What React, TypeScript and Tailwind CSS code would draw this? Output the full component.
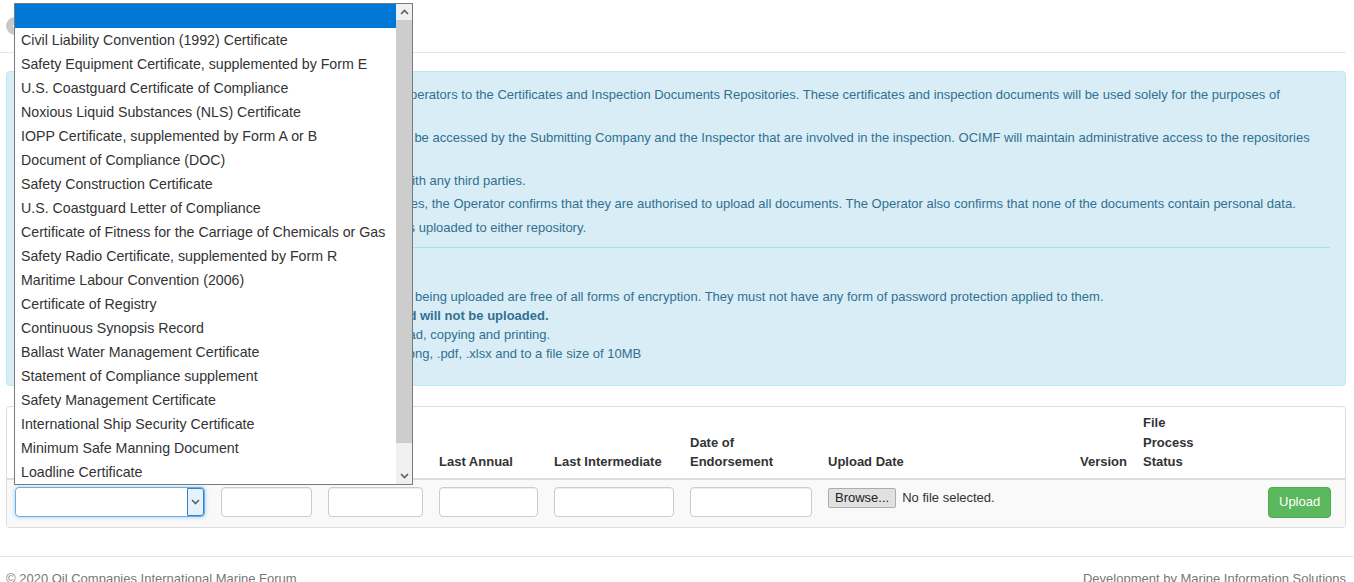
import { ChevronLeft } from 'lucide-react';

const certificateTypes = [
  '',
  'Civil Liability Convention (1992) Certificate',
  'Safety Equipment Certificate, supplemented by Form E',
  'U.S. Coastguard Certificate of Compliance',
  'Noxious Liquid Substances (NLS) Certificate',
  'IOPP Certificate, supplemented by Form A or B',
  'Document of Compliance (DOC)',
  'Safety Construction Certificate',
  'U.S. Coastguard Letter of Compliance',
  'Certificate of Fitness for the Carriage of Chemicals or Gas',
  'Safety Radio Certificate, supplemented by Form R',
  'Maritime Labour Convention (2006)',
  'Certificate of Registry',
  'Continuous Synopsis Record',
  'Ballast Water Management Certificate',
  'Statement of Compliance supplement',
  'Safety Management Certificate',
  'International Ship Security Certificate',
  'Minimum Safe Manning Document',
  'Loadline Certificate',
];

function Chevron({ up }: { up?: boolean }) {
  return (
    <svg width="9" height="6" viewBox="0 0 9 6" className="block">
      <polyline
        points={up ? '1,5 4.5,1.5 8,5' : '1,1 4.5,4.5 8,1'}
        fill="none"
        stroke="#606060"
        strokeWidth="1.6"
      />
    </svg>
  );
}

// open native list of the certificate type select
function SelectDropdown() {
  return (
    <div className="absolute left-[14px] top-[3px] z-10 flex h-[482px] w-[399px] border border-[#7a7a7a] bg-white">
      <ul className="w-[381px]">
        {certificateTypes.map((label, i) => (
          <li
            key={i}
            className={
              i === 0
                ? 'h-[24px] bg-[#0078d7] pl-[6px] leading-[24px] text-white'
                : 'h-[24px] whitespace-nowrap pl-[6px] text-[14.2px] leading-[24px] text-[#333]'
            }
          >
            {label}
          </li>
        ))}
      </ul>
      <div className="flex w-[16px] flex-col bg-[#f0f0f0]">
        <div className="flex h-[16px] items-center justify-center">
          <Chevron up />
        </div>
        <div className="h-[423px] bg-[#cdcdcd]" />
        <div className="flex flex-1 items-end justify-center pb-[5px]">
          <Chevron />
        </div>
      </div>
    </div>
  );
}

const inputCls =
  'block h-[30px] w-full rounded-[4px] border border-[#ccc] bg-white shadow-[inset_0_1px_1px_rgba(0,0,0,0.075)]';

const thCls = 'px-[8px] pb-[6px] pt-[6px]';
const tdCls = 'px-[8px] pb-[9px] pt-[7px]';

export default function App() {
  return (
    <div className="relative h-[582px] w-full overflow-hidden bg-white font-['Liberation_Sans',Arial,sans-serif] text-[13px] text-[#333]">
      <SelectDropdown />

      <header className="mr-[8px] flex h-[53px] items-center gap-3 border-b border-[#e5e5e5] pl-[6px]">
        <span className="flex h-[18px] w-[18px] items-center justify-center rounded-full bg-[#c8c8c8]">
          <ChevronLeft size={12} strokeWidth={3} className="text-white" />
        </span>
        <h1 className="text-[22px] text-[#333]">Certificates and Documents</h1>
      </header>

      <main className="pl-[6px] pr-[8px] pt-[18px]">
        <div className="rounded-[4px] border border-[#bce8f1] bg-[#d9edf7] px-[15px] pb-[22px] pt-[12px] text-[13px] text-[#31708f]">
          <p className="whitespace-nowrap leading-[21.5px]">
            OCIMF will provide access for Submitting Companies and Vessel Operators to the Certificates and
            Inspection Documents Repositories. These certificates and inspection documents will be used solely for
            the purposes of
            <br />
            the SIRE 2.0 inspection programme.
          </p>
          <p className="whitespace-nowrap leading-[21.5px]">
            All certificates and documents uploaded to the repositories can only be accessed by the Submitting
            Company and the Inspector that are involved in the inspection. OCIMF will maintain administrative access to
            the repositories
            <br />
            for support and maintenance purposes only.
          </p>
          <p className="whitespace-nowrap leading-[22px]">
            OCIMF will not share these certificates and inspection documents with any third parties.
          </p>
          <p className="whitespace-nowrap leading-[24px]">
            By uploading certificates and inspection documents to the repositories, the Operator confirms that they
            are authorised to upload all documents. The Operator also confirms that none of the documents contain
            personal data.
          </p>
          <p className="whitespace-nowrap leading-[24px]">
            OCIMF accepts no responsibility for the information in all documents uploaded to either repository.
          </p>
          <hr className="mt-[7px] border-0 border-t border-[#a6e1ec]" />
          <h4 className="mt-[12px] font-bold leading-[19px]">Document Requirements</h4>
          <div className="mt-[8px] whitespace-nowrap leading-[19px]">
            <p>
              Operators must check that all certificates and inspection documents being uploaded are free of all
              forms of encryption. They must not have any form of password protection applied to them.
            </p>
            <p className="font-bold">Any documents with encryption or password protection applied will not be uploaded.</p>
            <p>All PDF documents must allow permission for content extraction, read, copying and printing.</p>
            <p>
              Supported file types are restricted to .doc, .docx, .jpg, .jpeg, .bmp, .png, .pdf, .xlsx and to a file
              size of 10MB
            </p>
          </div>
        </div>

        <div className="mt-[20px] overflow-hidden rounded-[4px] border border-[#ddd]">
          <table className="w-full table-fixed border-collapse">
            <colgroup>
              <col className="w-[206px]" />
              <col className="w-[107px]" />
              <col className="w-[111px]" />
              <col className="w-[115px]" />
              <col className="w-[136px]" />
              <col className="w-[138px]" />
              <col className="w-[252px]" />
              <col className="w-[63px]" />
              <col className="w-[125px]" />
              <col />
            </colgroup>
            <thead>
              <tr className="border-b-2 border-[#ddd] text-left align-bottom text-[13px] font-bold leading-[19.5px]">
                <th className={thCls}>Certificate Type</th>
                <th className={thCls}>Issue Date</th>
                <th className={thCls}>Expiry Date</th>
                <th className={thCls}>Last Annual</th>
                <th className={thCls}>Last Intermediate</th>
                <th className={thCls}>
                  Date of
                  <br />
                  Endorsement
                </th>
                <th className={thCls}>Upload Date</th>
                <th className={thCls}>Version</th>
                <th className={thCls}>
                  File
                  <br />
                  Process
                  <br />
                  Status
                </th>
                <th className={thCls} />
              </tr>
            </thead>
            <tbody>
              <tr className="bg-[#f9f9f9] align-top">
                <td className={tdCls}>
                  <div className="flex h-[30px] w-[190px] justify-end rounded-[4px] border border-[#66afe9] bg-white shadow-[0_0_4px_rgba(102,175,233,0.6)]">
                    <span className="flex w-[17px] items-center justify-center rounded-r-[3px] border border-[#3c7fc6] bg-[#e5f1fb]">
                      <Chevron />
                    </span>
                  </div>
                </td>
                <td className={tdCls}>
                  <input className={inputCls} />
                </td>
                <td className={tdCls}>
                  <input className={inputCls} />
                </td>
                <td className={tdCls}>
                  <input className={inputCls} />
                </td>
                <td className={tdCls}>
                  <input className={inputCls} />
                </td>
                <td className={tdCls}>
                  <input className={inputCls} />
                </td>
                <td className="px-[8px] pb-[9px] pt-[8px]" colSpan={2}>
                  <div className="flex items-center gap-[6px] whitespace-nowrap">
                    <span className="flex h-[20px] items-center rounded-[2px] border border-[#adadad] bg-[#e1e1e1] px-[6px] text-[13px] text-[#222]">
                      Browse...
                    </span>
                    <span className="text-[13px] text-[#333]">No file selected.</span>
                  </div>
                </td>
                <td className={tdCls} />
                <td className={tdCls}>
                  <button className="h-[31px] rounded-[4px] border border-[#4cae4c] bg-[#5cb85c] px-[10px] text-[13px] text-white">
                    Upload
                  </button>
                </td>
              </tr>
            </tbody>
          </table>
        </div>
      </main>

      <footer className="mt-[28px] flex justify-between border-t border-[#e5e5e5] pl-[6px] pr-[8px] pt-[12px] text-[13px] leading-[19px] text-[#777]">
        <span>© 2020 Oil Companies International Marine Forum</span>
        <span>Development by Marine Information Solutions</span>
      </footer>
    </div>
  );
}
